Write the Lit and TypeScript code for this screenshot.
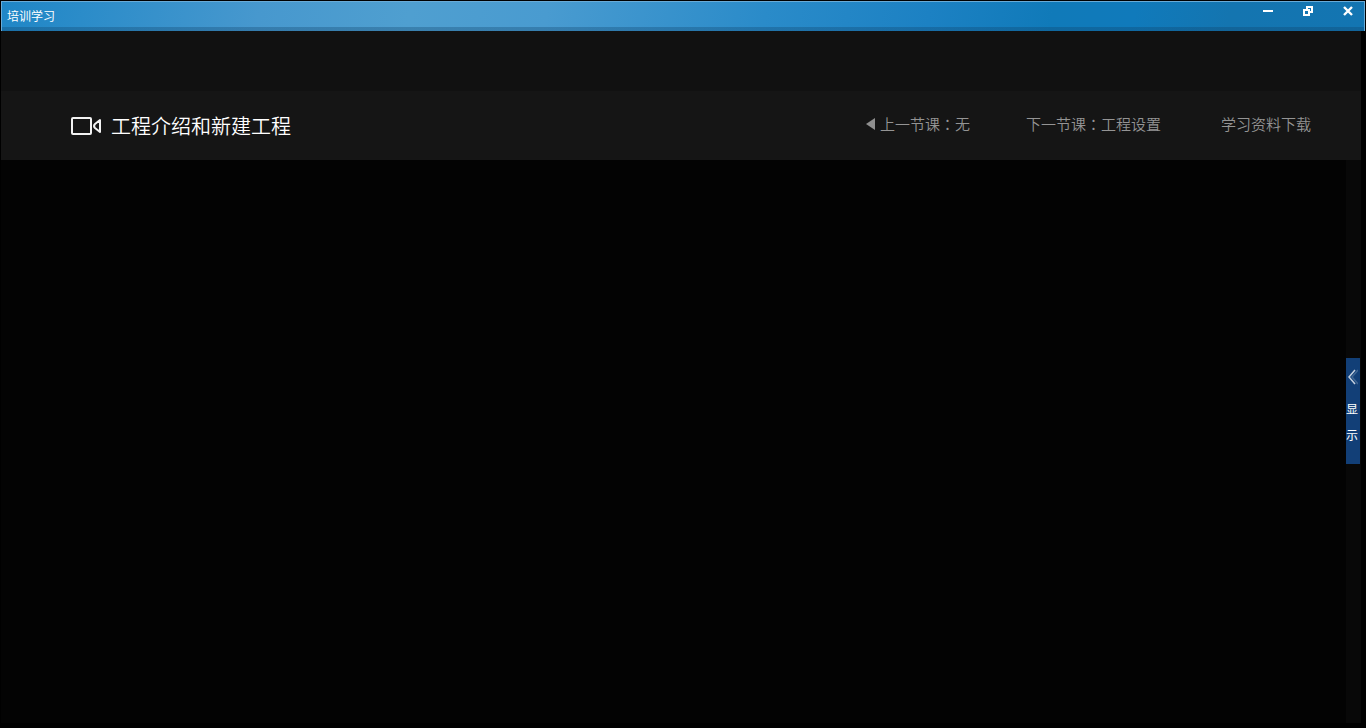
import { LitElement, html, css, svg } from "lit";
import { customElement, property, state } from "lit/decorators.js";

@customElement("window-bar")
class WindowBar extends LitElement {
  @property() caption = "";

  static styles = css`
    :host {
      display: flex;
      justify-content: space-between;
      box-sizing: border-box;
      height: 30px;
      border: 1px solid #69abd7;
      border-bottom: 0;
      background:
        linear-gradient(#0000 25px, #0d3f6650 25px),
        linear-gradient(100deg, #1f86c6 0%, #2b8cc9 6%, #4798ce 19%, #4f9fd0 30%, #499bd0 40%, #2a8bc9 56%, #1c81c3 68%, #107ab9 77%, #107abb 83%, #1475b0 90%, #1375b2 100%);
    }
    .caption {
      margin: 0;
      padding-left: 5px;
      font-size: 12px;
      font-weight: 400;
      line-height: 28px;
      color: #fff;
    }
    .controls {
      display: flex;
      align-items: flex-start;
      padding-right: 6px;
      gap: 20px;
    }
    button {
      display: block;
      width: 20px;
      height: 20px;
      padding: 0;
      border: 0;
      background: none;
      color: #fff;
    }
    svg {
      display: block;
    }
  `;

  private glyph(name: string) {
    switch (name) {
      case "minimize":
        return svg`<path d="M5 8h10v2H5z" fill="currentColor"/>`;
      case "restore":
        return svg`<path fill-rule="evenodd" fill="currentColor" d="M5 7h7v7H5zM7 9v3h3V9z"/><path fill="currentColor" d="M8 4h7v7h-3V9h1V6h-3v1H8z"/>`;
      default:
        return svg`<path d="M6 5l8 8M14 5l-8 8" fill="none" stroke="currentColor" stroke-width="2.4"/>`;
    }
  }

  render() {
    const controls = [
      ["minimize", "最小化"],
      ["restore", "还原"],
      ["close", "关闭"],
    ];
    return html`
      <h1 class="caption">${this.caption}</h1>
      <div class="controls">
        ${controls.map(
          ([name, label]) => html`<button type="button" aria-label=${label}>
            <svg width="20" height="20" viewBox="0 0 20 20">${this.glyph(name)}</svg>
          </button>`
        )}
      </div>
    `;
  }
}

@customElement("lesson-header")
class LessonHeader extends LitElement {
  @property() heading = "";

  static styles = css`
    :host {
      display: flex;
      align-items: center;
      justify-content: space-between;
      box-sizing: border-box;
      height: 69px;
      padding: 0 50px 0 70px;
      background: #151515;
    }
    .title {
      display: flex;
      align-items: center;
      gap: 10px;
      margin: 0;
      font-size: 20px;
      font-weight: 350;
      line-height: 30px;
      color: #fff;
    }
    nav {
      display: flex;
      padding-bottom: 4px;
      font-size: 15px;
      font-weight: 350;
      line-height: 24px;
    }
    a {
      display: flex;
      align-items: center;
      margin-left: 56px;
      color: #949494;
      text-decoration: none;
    }
    a:last-child {
      margin-left: 60px;
    }
    .colon {
      font-family: "Noto Sans CJK TC", sans-serif;
    }
    svg {
      display: block;
    }
    .arrow {
      margin-right: 5px;
    }
  `;

  render() {
    return html`
      <h2 class="title">
        <svg width="30" height="20" viewBox="0 0 30 20" fill="none" stroke="#f2f2f2" stroke-width="2" stroke-linejoin="round">
          <rect x="1" y="2" width="19" height="16" rx="1" />
          <path d="M29 4v12l-5-4q-2-2 0-4z" />
        </svg>
        ${this.heading}
      </h2>
      <nav>
        <a href="#prev">
          <svg class="arrow" width="9" height="12" viewBox="0 0 9 12"><path d="M0 6L9 0v12z" fill="#8f8f8f" /></svg>
          <span>上一节课<span class="colon" lang="zh-Hant">：</span>无</span>
        </a>
        <a href="#next"><span>下一节课<span class="colon" lang="zh-Hant">：</span>工程设置</span></a>
        <a href="#files">学习资料下载</a>
      </nav>
    `;
  }
}

@customElement("app-root")
class AppRoot extends LitElement {
  @state() private open = false;

  static styles = css`
    :host {
      display: flex;
      flex-direction: column;
      box-sizing: border-box;
      height: 100vh;
      padding: 1px 1px 5px;
      background: #000;
      font-family: "Noto Sans CJK SC", sans-serif;
    }
    .client {
      flex: 1;
      display: flex;
      flex-direction: column;
      margin-right: 4px;
      background: #030303;
    }
    .banner {
      height: 60px;
      background: #111;
    }
    .stage {
      flex: 1;
      display: flex;
    }
    .player {
      flex: 1;
    }
    .rail {
      display: flex;
      flex-direction: column;
      width: 15px;
      background: #080808;
    }
    .rail::before {
      content: "";
      flex: 198;
    }
    .rail::after {
      content: "";
      flex: 259;
    }
    .toggle {
      display: flex;
      flex-direction: column;
      align-items: center;
      box-sizing: border-box;
      width: 14px;
      height: 106px;
      padding: 11px 2px 0 0;
      border: 0;
      background: #123f77;
      color: #fff;
      font-family: inherit;
      font-size: 12px;
      line-height: 26px;
    }
    .toggle svg {
      display: block;
      margin-bottom: 11px;
    }
  `;

  render() {
    return html`
      <window-bar caption="培训学习"></window-bar>
      <main class="client">
        <div class="banner"></div>
        <lesson-header heading="工程介绍和新建工程"></lesson-header>
        <div class="stage">
          <div class="player"></div>
          <div class="rail">
            <button class="toggle" type="button" aria-expanded=${this.open} @click=${() => (this.open = !this.open)}>
              <svg width="12" height="16" viewBox="0 0 12 16" fill="none">
                <path d="M12 1L6 8l6 7" stroke="#3f6592" stroke-width="1.500" />
                <path d="M9 1L3 8l6 7" stroke="#c3cfde" stroke-width="1.500" />
              </svg>
              <span>显</span>
              <span>示</span>
            </button>
          </div>
        </div>
      </main>
    `;
  }
}
